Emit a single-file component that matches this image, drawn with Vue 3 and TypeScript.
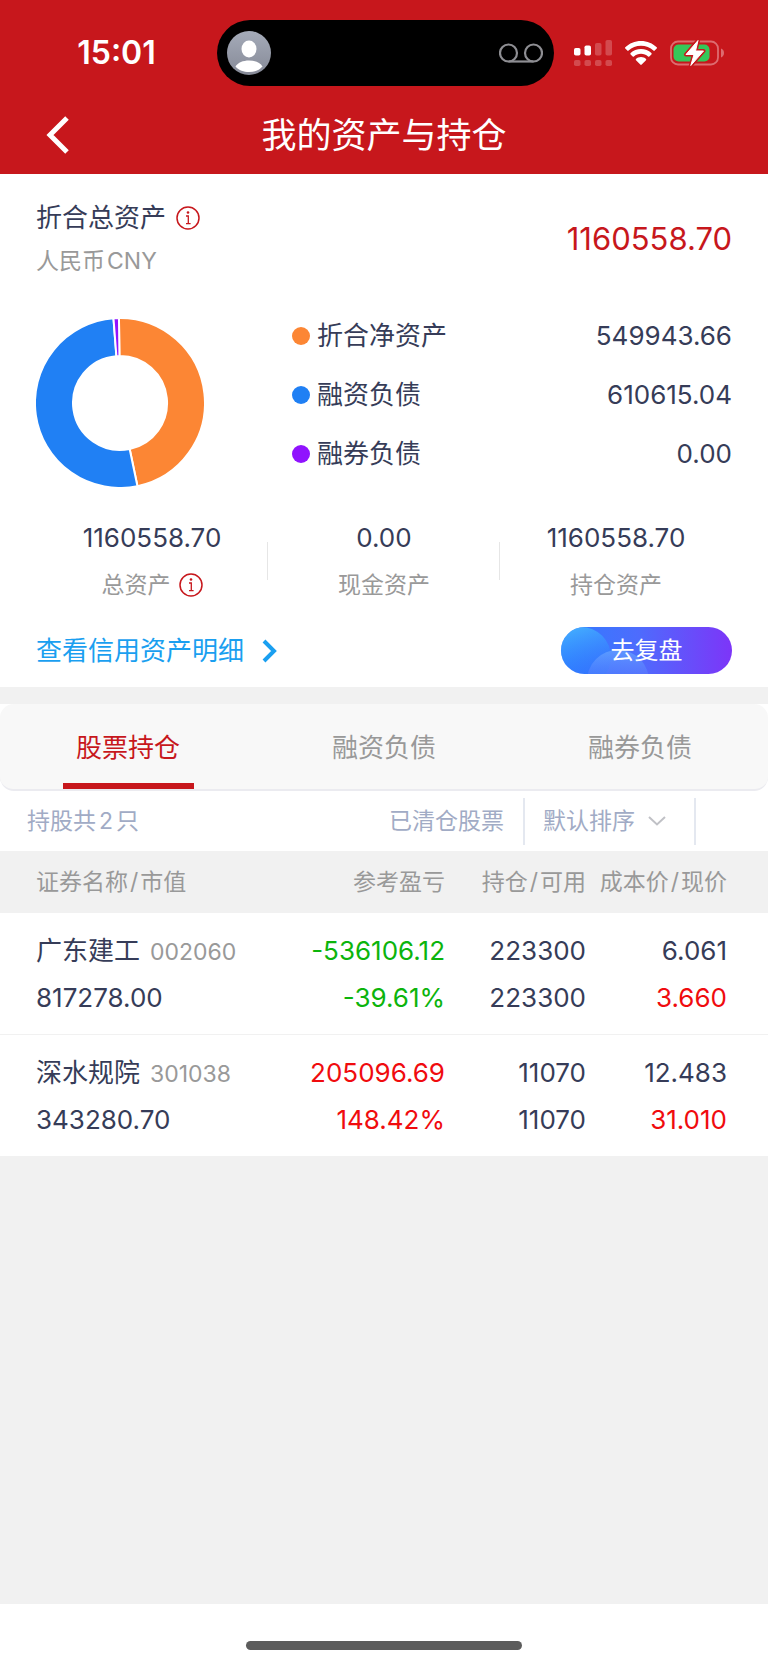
<script setup lang="ts">
interface Slice {
  name: string
  value: number
  text: string
  color: string
}

interface Holding {
  name: string
  code: string
  marketValue: string
  profit: string
  profitRate: string
  trend: 'up' | 'down'
  held: string
  available: string
  cost: string
  price: string
}

const slices: Slice[] = [
  { name: '折合净资产', value: 549943.66, text: '549943.66', color: '#fc8634' },
  { name: '融资负债', value: 610615.04, text: '610615.04', color: '#2080f4' },
  { name: '融券负债', value: 0, text: '0.00', color: '#9013fe' },
]

const stats = [
  { value: '1160558.70', label: '总资产', info: true },
  { value: '0.00', label: '现金资产', info: false },
  { value: '1160558.70', label: '持仓资产', info: false },
]

const tabs = ['股票持仓', '融资负债', '融券负债']

const holdings: Holding[] = [
  {
    name: '广东建工', code: '002060', marketValue: '817278.00',
    profit: '-536106.12', profitRate: '-39.61%', trend: 'down',
    held: '223300', available: '223300', cost: '6.061', price: '3.660',
  },
  {
    name: '深水规院', code: '301038', marketValue: '343280.70',
    profit: '205096.69', profitRate: '148.42%', trend: 'up',
    held: '11070', available: '11070', cost: '12.483', price: '31.010',
  },
]

// Empty slices keep a small minimum angle so they stay visible.
const MIN_ANGLE = 3.7
const START_ANGLE = -0.7
const OUTER = 85
const INNER = 47

function point(radius: number, degrees: number): string {
  const rad = (degrees * Math.PI) / 180
  return `${(85 + radius * Math.sin(rad)).toFixed(2)} ${(85 - radius * Math.cos(rad)).toFixed(2)}`
}

const total = slices.reduce((sum, s) => sum + s.value, 0)
const free = 360 - MIN_ANGLE * slices.filter((s) => s.value === 0).length
let cursor = START_ANGLE
const arcs = slices.map((s) => {
  const span = s.value === 0 ? MIN_ANGLE : (s.value / total) * free
  const from = cursor
  const to = cursor + span
  cursor = to
  const large = span > 180 ? 1 : 0
  return {
    color: s.color,
    d: `M${point(OUTER, from)}A${OUTER} ${OUTER} 0 ${large} 1 ${point(OUTER, to)}L${point(INNER, to)}A${INNER} ${INNER} 0 ${large} 0 ${point(INNER, from)}Z`,
  }
})
</script>

<template>
  <div class="page">
    <header class="top">
      <div class="status">
        <time class="clock">15:01</time>
        <div class="island">
          <svg class="avatar" viewBox="0 0 44 44" aria-hidden="true">
            <defs>
              <linearGradient id="avatarFill" x1="0" y1="0" x2="0" y2="1">
                <stop offset="0" stop-color="#a5abb9" />
                <stop offset="1" stop-color="#868a97" />
              </linearGradient>
            </defs>
            <circle cx="22" cy="22" r="22" fill="url(#avatarFill)" />
            <ellipse cx="22" cy="18" rx="7.5" ry="8.5" fill="#fff" />
            <path d="M8.500 35.500C11 31.500 16 29.500 22 29.500S33 31.500 35.500 35.500C32 39.500 27.500 41 22 41S12 39.500 8.500 35.500Z" fill="#fff" />
          </svg>
          <svg class="voicemail" viewBox="0 0 44 20" fill="none" stroke="#8e8e93" stroke-width="2.200" aria-hidden="true">
            <circle cx="9.500" cy="10" r="8.500" />
            <circle cx="34.500" cy="10" r="8.500" />
            <path d="M9.500 18.500H34.500" />
          </svg>
        </div>
        <div class="indicators">
          <svg class="signal" viewBox="0 0 38 26" fill="#fff" aria-hidden="true">
            <rect x="0" y="8" width="6.500" height="7.500" rx="1.800" />
            <rect x="10.500" y="5.500" width="6.500" height="10" rx="1.800" />
            <g opacity=".22">
              <rect x="21" y="3" width="6.500" height="12.500" rx="1.800" />
              <rect x="31.500" y="0" width="6.500" height="15.500" rx="1.800" />
              <rect x="0" y="20" width="6.500" height="6" rx="1.800" />
              <rect x="10.500" y="20" width="6.500" height="6" rx="1.800" />
              <rect x="21" y="20" width="6.500" height="6" rx="1.800" />
              <rect x="31.500" y="20" width="6.500" height="6" rx="1.800" />
            </g>
          </svg>
          <svg class="wifi" viewBox="0 0 32 24" fill="#fff" aria-hidden="true">
            <path d="M16 0C22.200 0 27.700 2.400 31.700 6.300C32.100 6.700 32.100 7.200 31.700 7.600L29.700 9.600C29.300 10 28.800 10 28.400 9.600C25.200 6.500 20.800 4.700 16 4.700S6.800 6.500 3.600 9.600C3.200 10 2.700 10 2.300 9.600L.300 7.600C-.100 7.200-.100 6.700.300 6.300C4.300 2.400 9.800 0 16 0Z" />
            <path d="M16 8C20 8 23.700 9.500 26.400 12.100C26.800 12.500 26.800 13 26.400 13.400L24.300 15.500C23.900 15.900 23.500 15.900 23.100 15.500C21.200 13.700 18.700 12.700 16 12.700S10.800 13.700 8.900 15.500C8.500 15.900 8.100 15.900 7.700 15.500L5.600 13.400C5.200 13 5.200 12.500 5.600 12.100C8.300 9.500 12 8 16 8Z" />
            <path d="M16 16C18 16 19.700 16.700 21 17.900C21.400 18.300 21.400 18.800 21 19.200L16.700 23.500C16.200 24 15.800 24 15.300 23.500L11 19.200C10.600 18.800 10.600 18.300 11 17.900C12.300 16.700 14 16 16 16Z" />
          </svg>
          <svg class="battery" viewBox="0 0 54 28" aria-hidden="true">
            <rect x="1" y="2.500" width="47" height="23" rx="7" fill="none" stroke="#dd6c70" stroke-width="1.800" />
            <path d="M51 9.500C53.200 10.400 54 12.100 54 14S53.200 17.600 51 18.500Z" fill="#dd6c70" />
            <rect x="3.500" y="5.500" width="36" height="17" rx="5" fill="#34c759" />
            <path d="M28 1.500L16 15.500H24L20.800 26.500L33.500 12H25.500Z" fill="#fff" stroke="#c7171c" stroke-width="4" stroke-linejoin="round" />
            <path d="M28 1.500L16 15.500H24L20.800 26.500L33.500 12H25.500Z" fill="#fff" stroke="#fff" stroke-linejoin="round" />
          </svg>
        </div>
      </div>
      <nav class="nav">
        <button class="back" type="button" aria-label="返回">
          <svg viewBox="0 0 24 38" fill="none" stroke="#fff" stroke-width="5" aria-hidden="true">
            <path d="M21 2L4 19L21 36" />
          </svg>
        </button>
        <h1>我的资产与持仓</h1>
      </nav>
    </header>

    <main>
      <section class="summary">
        <div class="total">
          <div>
            <div class="total-name">
              <span>折合总资产</span>
              <button class="info" type="button" aria-label="折合总资产说明">
                <svg viewBox="0 0 24 24" aria-hidden="true">
                  <circle cx="12" cy="12" r="11" fill="none" stroke="#c7171c" stroke-width="1.500" />
                  <circle cx="12" cy="6.500" r="1.300" fill="#c7171c" />
                  <path d="M10 10H12.300V17.500M10 17.600H14.600" fill="none" stroke="#c7171c" stroke-width="1.300" />
                </svg>
              </button>
            </div>
            <div class="currency">人民币<span>CNY</span></div>
          </div>
          <strong class="total-value">1160558.70</strong>
        </div>

        <div class="breakdown">
          <svg class="donut" viewBox="1 1 168 168" role="img" aria-label="资产构成">
            <path v-for="arc in arcs" :key="arc.color" :d="arc.d" :fill="arc.color" stroke="#fff" stroke-width="2" />
          </svg>
          <ul class="legend">
            <li v-for="s in slices" :key="s.name">
              <svg class="dot" viewBox="0 0 18 18" aria-hidden="true"><circle cx="9" cy="9" r="9" :fill="s.color" /></svg>
              <span>{{ s.name }}</span>
              <span class="amount">{{ s.text }}</span>
            </li>
          </ul>
        </div>

        <dl class="stats">
          <div v-for="s in stats" :key="s.label" class="stat">
            <dd>{{ s.value }}</dd>
            <dt>
              {{ s.label }}
              <button v-if="s.info" class="info" type="button" aria-label="总资产说明">
                <svg viewBox="0 0 24 24" aria-hidden="true">
                  <circle cx="12" cy="12" r="11" fill="none" stroke="#c7171c" stroke-width="1.500" />
                  <circle cx="12" cy="6.500" r="1.300" fill="#c7171c" />
                  <path d="M10 10H12.300V17.500M10 17.600H14.600" fill="none" stroke="#c7171c" stroke-width="1.300" />
                </svg>
              </button>
            </dt>
          </div>
        </dl>

        <div class="actions">
          <a href="#detail" class="detail">
            查看信用资产明细
            <svg viewBox="0 0 16 24" fill="none" stroke="#1a9ff0" stroke-width="4" aria-hidden="true">
              <path d="M2 2L12 12L2 22" />
            </svg>
          </a>
          <button class="review" type="button">
            <svg class="bubbles" viewBox="0 0 171 47" preserveAspectRatio="xMinYMin slice" aria-hidden="true">
              <defs>
                <linearGradient id="bubbleA" x1="0" y1="0" x2=".3" y2="1">
                  <stop offset="0" stop-color="#4ac0ff" stop-opacity=".9" />
                  <stop offset=".85" stop-color="#2b78ff" stop-opacity=".4" />
                </linearGradient>
                <linearGradient id="bubbleB" x1="0" y1="0" x2="0" y2="1">
                  <stop offset="0" stop-color="#69a8ff" stop-opacity=".7" />
                  <stop offset=".5" stop-color="#5f7dff" stop-opacity=".3" />
                </linearGradient>
              </defs>
              <circle cx="20" cy="30" r="30" fill="url(#bubbleA)" />
              <circle cx="57" cy="54" r="31" fill="url(#bubbleB)" />
            </svg>
            <span>去复盘</span>
          </button>
        </div>
      </section>

      <section class="positions">
        <div class="tabs" role="tablist">
          <button
            v-for="(tab, i) in tabs"
            :key="tab"
            type="button"
            role="tab"
            class="tab"
            :class="{ active: i === 0 }"
            :aria-selected="i === 0"
          >{{ tab }}</button>
        </div>

        <div class="filters">
          <span class="count">持股共<span>2</span>只</span>
          <a href="#closed" class="closed">已清仓股票</a>
          <button class="sort" type="button">
            默认排序
            <svg viewBox="0 0 18 10" fill="none" stroke="#c0c1c6" stroke-width="2" aria-hidden="true">
              <path d="M1 1L9 8.500L17 1" />
            </svg>
          </button>
        </div>

        <table class="table">
          <colgroup>
            <col />
            <col class="col-profit" />
            <col class="col-held" />
            <col class="col-price" />
          </colgroup>
          <thead>
            <tr>
              <th scope="col">证券名称<span>/</span>市值</th>
              <th scope="col">参考盈亏</th>
              <th scope="col">持仓<span>/</span>可用</th>
              <th scope="col">成本价<span>/</span>现价</th>
            </tr>
          </thead>
          <tbody>
            <tr v-for="h in holdings" :key="h.code">
              <td>
                <div class="line">{{ h.name }}<span class="code">{{ h.code }}</span></div>
                <div class="line">{{ h.marketValue }}</div>
              </td>
              <td :class="h.trend">
                <div class="line">{{ h.profit }}</div>
                <div class="line">{{ h.profitRate }}</div>
              </td>
              <td>
                <div class="line">{{ h.held }}</div>
                <div class="line">{{ h.available }}</div>
              </td>
              <td>
                <div class="line">{{ h.cost }}</div>
                <div class="line up">{{ h.price }}</div>
              </td>
            </tr>
          </tbody>
        </table>
      </section>
    </main>

    <footer class="home"><span class="home-bar"></span></footer>
  </div>
</template>

<style>
body {
  margin: 0;
  background: #f1f1f1;
}
</style>

<style scoped>
.page {
  display: flex;
  flex-direction: column;
  min-height: 100vh;
  background: #f1f1f1;
  color: #363c58;
  font-family: Inter, "Noto Sans CJK SC", sans-serif;
  font-size: 26px;
  line-height: 36px;
}
.page * {
  box-sizing: border-box;
}
button {
  padding: 0;
  border: 0;
  background: none;
  color: inherit;
  font: inherit;
  cursor: pointer;
}
a {
  text-decoration: none;
}
svg {
  display: block;
  flex: none;
}

.top {
  padding-top: 20px;
  background: #c7171c;
  color: #fff;
}
.status {
  display: grid;
  grid-template-columns: 217px 1fr 214px;
  align-items: center;
}
.clock {
  padding-left: 16px;
  text-align: center;
  font-size: 32px;
  font-weight: 600;
}
.island {
  display: flex;
  align-items: center;
  justify-content: space-between;
  height: 66px;
  padding: 0 11px 0 10px;
  border-radius: 33px;
  background: #000;
}
.avatar {
  width: 44px;
  height: 44px;
}
.voicemail {
  width: 44px;
  height: 20px;
}
.indicators {
  display: flex;
  align-items: center;
  gap: 13px;
  padding-left: 20px;
}
.signal {
  width: 38px;
  height: 26px;
}
.wifi {
  width: 32px;
  height: 24px;
}
.battery {
  width: 54px;
  height: 28px;
}
.nav {
  display: grid;
  grid-template-columns: 70px 1fr 70px;
  align-items: center;
  height: 88px;
  padding-top: 10px;
}
.back {
  justify-self: end;
}
.back svg {
  width: 24px;
  height: 38px;
}
h1 {
  margin: 0;
  text-align: center;
  font-size: 35px;
  font-weight: 400;
  line-height: 48px;
}

main {
  flex: 1;
}
.summary {
  padding: 25px 36px 13px;
  background: #fff;
}
.total {
  display: flex;
  align-items: center;
  justify-content: space-between;
  height: 80px;
}
.total-name {
  display: flex;
  align-items: center;
  gap: 10px;
  height: 38px;
}
.info svg {
  width: 24px;
  height: 24px;
}
.currency {
  height: 42px;
  padding-top: 6px;
  color: #999;
  font-size: 23px;
}
.currency span {
  margin-left: 2px;
}
.total-value {
  color: #c7171c;
  font-size: 31px;
  font-weight: 400;
}
.breakdown {
  display: flex;
  align-items: center;
  padding-top: 39px;
}
.donut {
  width: 168px;
  height: 168px;
}
.legend {
  flex: 1;
  display: grid;
  gap: 23px;
  margin: 0 0 16px 88px;
  padding: 0;
  list-style: none;
}
.legend li {
  display: flex;
  align-items: center;
  gap: 7px;
}
.dot {
  width: 18px;
  height: 18px;
}
.amount {
  margin-left: auto;
}
.stats {
  display: grid;
  grid-template-columns: repeat(3, 1fr);
  margin: 32px 0 0;
}
.stat {
  display: flex;
  flex-direction: column;
  gap: 11px;
  text-align: center;
  background: linear-gradient(#e6e6e6, #e6e6e6) no-repeat right 22px / 1px 38px;
}
.stat:last-child {
  background: none;
}
.stat dd {
  margin: 0;
}
.stat dt {
  display: flex;
  align-items: center;
  justify-content: center;
  gap: 8px;
  color: #999;
  font-size: 23px;
}
.actions {
  display: flex;
  align-items: center;
  justify-content: space-between;
  margin-top: 24px;
}
.detail {
  display: flex;
  align-items: center;
  gap: 18px;
  color: #1a9ff0;
}
.detail svg {
  width: 16px;
  height: 24px;
}
.review {
  position: relative;
  width: 171px;
  height: 47px;
  overflow: hidden;
  border-radius: 24px;
  background: linear-gradient(90deg, #2f7dff, #4d6cfd 45%, #7d35f8);
  color: #fff;
  font-size: 24px;
}
.bubbles {
  position: absolute;
  inset: 0;
  width: 100%;
  height: 100%;
}
.review span {
  position: relative;
}

.positions {
  margin-top: 17px;
  background: #fff;
}
.tabs {
  display: grid;
  grid-template-columns: repeat(3, 1fr);
  height: 87px;
  border-bottom: 2px solid #ebebf0;
  border-radius: 14px;
  background: #f8f8f8;
}
.tab {
  padding-top: 2px;
  color: #999;
  background: no-repeat center bottom / 131px 6px;
}
.tab.active {
  color: #c7171c;
  background-image: linear-gradient(#c7171c, #c7171c);
}
.filters {
  display: flex;
  align-items: center;
  height: 60px;
  padding: 0 72px 0 27px;
  color: #a1abc5;
  font-size: 23px;
}
.count span {
  margin: 0 3px;
}
.closed {
  margin-left: auto;
  padding-right: 19px;
  color: inherit;
}
.sort {
  display: flex;
  align-items: center;
  gap: 13px;
  height: 47px;
  padding: 0 28px 0 18px;
  border: solid #e4e8f0;
  border-width: 0 2px;
}
.sort svg {
  width: 18px;
  height: 10px;
}

.table {
  width: 100%;
  table-layout: fixed;
  border-collapse: collapse;
}
.col-profit {
  width: 170px;
}
.col-held {
  width: 141px;
}
.col-price {
  width: 182px;
}
th {
  height: 62px;
  padding: 0;
  background: #f1f1f1;
  color: #999;
  font-size: 23px;
  font-weight: 400;
  text-align: right;
  white-space: nowrap;
}
th span {
  margin: 0 2px;
}
td {
  padding: 14px 0 13px;
  text-align: right;
  white-space: nowrap;
}
th:first-child,
td:first-child {
  padding-left: 36px;
  text-align: left;
}
th:last-child,
td:last-child {
  padding-right: 41px;
}
tbody tr {
  border-bottom: 1px solid #f1f1f1;
}
.line {
  height: 47px;
  line-height: 47px;
}
.code {
  margin-left: 10px;
  color: #999;
  font-size: 23px;
}
.up {
  color: #f00b0e;
}
.down {
  color: #0cb40c;
}

.home {
  display: flex;
  align-items: center;
  justify-content: center;
  height: 61px;
  padding-top: 22px;
  background: #fff;
}
.home-bar {
  width: 36%;
  height: 9px;
  border-radius: 5px;
  background: #5c5c5c;
}
</style>
